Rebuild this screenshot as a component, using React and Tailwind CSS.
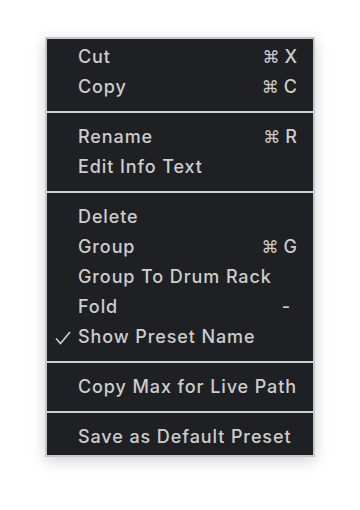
import React from "react";

const groups = [
  [
    { label: "Cut", sc: "X" },
    { label: "Copy", sc: "C" },
  ],
  [
    { label: "Rename", sc: "R" },
    { label: "Edit Info Text" },
  ],
  [
    { label: "Delete" },
    { label: "Group", sc: "G" },
    { label: "Group To Drum Rack" },
    { label: "Fold", dash: true },
    { label: "Show Preset Name", check: true },
  ],
  [{ label: "Copy Max for Live Path" }],
  [{ label: "Save as Default Preset" }],
];

function Check() {
  return (
    <svg width="16" height="14" viewBox="0 0 16 14" className="absolute left-[8px] top-[9px]">
      <polyline points="1,7.5 5.5,12.5 15,1" fill="none" stroke="#cfcfcf" strokeWidth="1.6" />
    </svg>
  );
}

function Row({ item }) {
  return (
    <div className="relative flex h-[30px] items-center whitespace-nowrap pl-[31px] pr-[16px]">
      {item.check && <Check />}
      <span className="flex-1">{item.label}</span>
      {item.sc && (
        <span className="flex items-center gap-[5px] tracking-normal">
          <span className="text-[17px] font-['DejaVu_Sans',sans-serif] font-normal">⌘</span>
          <span>{item.sc}</span>
        </span>
      )}
      {item.dash && <span className="pr-[6px]">-</span>}
    </div>
  );
}

export default function App() {
  return (
    <div className="flex h-[510px] w-[360px] justify-center bg-white pt-[37px]">
      <div className="h-fit w-[270px] border-2 border-[#c8c8c8] bg-[#1f2023] py-[3px] text-[18px] font-medium leading-none tracking-[0.9px] text-[#cdcdcd] shadow-[0_4px_14px_rgba(0,0,0,0.18)] font-['Inter',sans-serif]">
        {groups.map((g, i) => (
          <React.Fragment key={i}>
            {i > 0 && <div className="my-[9px] h-[2px] bg-[#cfcfcf]" />}
            {g.map((item) => (
              <Row key={item.label} item={item} />
            ))}
          </React.Fragment>
        ))}
      </div>
    </div>
  );
}
